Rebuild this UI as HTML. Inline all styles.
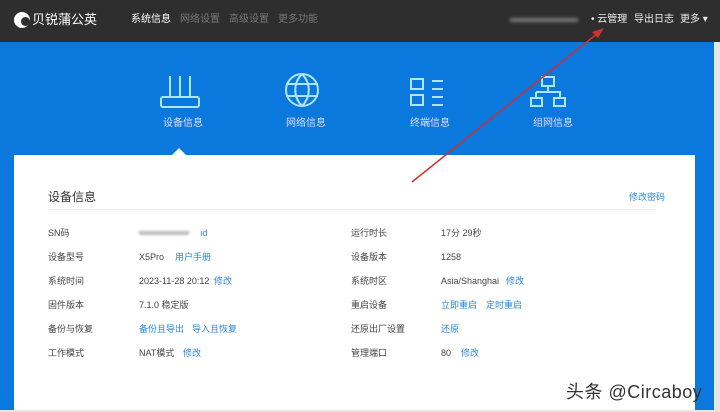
<!DOCTYPE html>
<html><head><meta charset="utf-8"><style>
*{margin:0;padding:0;box-sizing:border-box}
body{width:720px;height:412px;overflow:hidden;background:#e6e6e6;font-family:"Liberation Sans","Noto Sans CJK SC",sans-serif;position:relative}
.top{position:absolute;left:0;top:0;width:720px;height:42px;background:#2e2e2e}
.t{position:absolute;font-size:10px;line-height:12px;color:#eee;white-space:nowrap}
.blue{position:absolute;left:0;top:42px;width:714px;height:368px;background:#0a78dc}
.card{position:absolute;left:14px;top:155px;width:681px;height:255px;background:#fff}
.lab{position:absolute;font-size:10px;line-height:12px;color:#ddf;white-space:nowrap}
.r{position:absolute;font-size:9px;line-height:12px;color:#444;white-space:nowrap}
.a{color:#2a86d8}
</style></head><body>
<div class="top"></div>
<div style="position:absolute;left:14px;top:12px;width:16px;height:16px;border-radius:50%;background:#fff"></div>
<div style="position:absolute;left:21px;top:17px;width:9px;height:9px;border-radius:50%;background:#2e2e2e"></div>
<div class="t" style="left:32px;top:12px;font-size:13px;line-height:16px;color:#fff">贝锐蒲公英</div>
<div class="t" style="left:131px;top:14px;color:#fff">系统信息</div>
<div class="t" style="left:180px;top:14px;color:#777">网络设置</div>
<div class="t" style="left:229px;top:14px;color:#777">高级设置</div>
<div class="t" style="left:278px;top:14px;color:#777">更多功能</div>
<div style="position:absolute;left:510px;top:18px;width:68px;height:4px;background:#777;filter:blur(1.5px)"></div>
<div class="t" style="left:591px;top:14px">• 云管理</div>
<div class="t" style="left:634px;top:14px">导出日志</div>
<div class="t" style="left:680px;top:14px">更多 ▾</div>
<div class="blue"></div>
<svg style="position:absolute;left:0;top:42px" width="720" height="120" fill="none" stroke="#aee6ff" stroke-width="2">
<path d="M170 34V55M180 34V55M190 34V55"/><rect x="161" y="55" width="38" height="10" rx="2"/>
<circle cx="302" cy="48" r="16"/><path d="M286 42h32M286 54h32M302 32c-9 9-9 23 0 32M302 32c9 9 9 23 0 32"/>
<rect x="411" y="37" width="12" height="10"/><rect x="411" y="53" width="12" height="10"/><path d="M432 39h11M432 47h11M432 55h11M432 63h11"/>
<rect x="542" y="35" width="12" height="9"/><path d="M548 44v6M536 50h24v6M536 50v6"/><rect x="531" y="56" width="11" height="8"/><rect x="554" y="56" width="11" height="8"/>
</svg>
<div class="lab" style="left:163px;top:118px">设备信息</div>
<div class="lab" style="left:286px;top:118px">网络信息</div>
<div class="lab" style="left:410px;top:118px">终端信息</div>
<div class="lab" style="left:533px;top:118px">组网信息</div>
<div style="position:absolute;left:172px;top:148px;border:7px solid transparent;border-bottom-color:#fff;border-top:0"></div>
<div class="card"></div>
<div class="r" style="left:48px;top:190px;font-size:12px;line-height:14px;color:#333">设备信息</div>
<div class="r a" style="left:629px;top:191px">修改密码</div>
<div style="position:absolute;left:48px;top:209px;width:608px;height:1px;background:#eee"></div>
<div class="r" style="left:48px;top:227px">SN码</div><div style="position:absolute;left:139px;top:231px;width:50px;height:4px;background:#bbb;filter:blur(1.2px)"></div><div class="r a" style="left:200px;top:227px">ıd</div>
<div class="r" style="left:48px;top:251px">设备型号</div><div class="r" style="left:139px;top:251px">X5Pro</div><div class="r a" style="left:175px;top:251px">用户手册</div>
<div class="r" style="left:48px;top:275px">系统时间</div><div class="r" style="left:139px;top:275px">2023-11-28 20:12</div><div class="r a" style="left:214px;top:275px">修改</div>
<div class="r" style="left:48px;top:299px">固件版本</div><div class="r" style="left:139px;top:299px">7.1.0 稳定版</div>
<div class="r" style="left:48px;top:323px">备份与恢复</div><div class="r a" style="left:139px;top:323px">备份且导出</div><div class="r a" style="left:192px;top:323px">导入且恢复</div>
<div class="r" style="left:48px;top:347px">工作模式</div><div class="r" style="left:139px;top:347px">NAT模式</div><div class="r a" style="left:183px;top:347px">修改</div>
<div class="r" style="left:351px;top:227px">运行时长</div><div class="r" style="left:441px;top:227px">17分 29秒</div>
<div class="r" style="left:351px;top:251px">设备版本</div><div class="r" style="left:441px;top:251px">1258</div>
<div class="r" style="left:351px;top:275px">系统时区</div><div class="r" style="left:441px;top:275px">Asia/Shanghai</div><div class="r a" style="left:506px;top:275px">修改</div>
<div class="r" style="left:351px;top:299px">重启设备</div><div class="r a" style="left:441px;top:299px">立即重启</div><div class="r a" style="left:486px;top:299px">定时重启</div>
<div class="r" style="left:351px;top:323px">还原出厂设置</div><div class="r a" style="left:441px;top:323px">还原</div>
<div class="r" style="left:351px;top:347px">管理端口</div><div class="r" style="left:441px;top:347px">80</div><div class="r a" style="left:461px;top:347px">修改</div>
<svg style="position:absolute;left:0;top:0" width="720" height="412"><path d="M412 182L598 33" stroke="#d03030" stroke-width="1.5"/><path d="M604 28L592 32L598 38Z" fill="#d03030"/></svg>
<div class="r" style="left:566px;top:382px;font-size:18px;line-height:20px;color:#333;letter-spacing:0.5px">头条 @Circaboy</div>
</body></html>
